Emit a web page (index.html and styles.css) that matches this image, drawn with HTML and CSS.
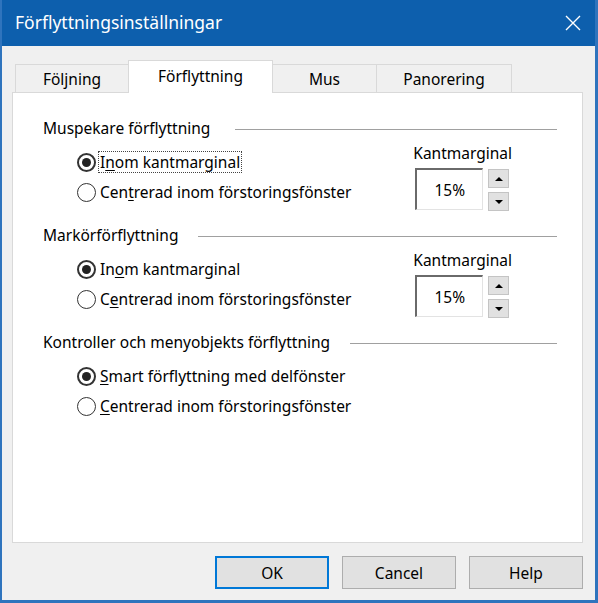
FILE: index.html
```html
<!DOCTYPE html>
<html lang="sv">
<head>
<meta charset="utf-8">
<title>Förflyttningsinställningar</title>
<link rel="stylesheet" href="styles.css">
</head>
<body>
<div class="window">
  <div class="titlebar">
    <span class="title">Förflyttningsinställningar</span>
    <span class="close">
      <svg width="16" height="16" viewBox="0 0 16 16"><path d="M1 1 L15 15 M15 1 L1 15" stroke="#fff" stroke-width="1.4" fill="none"/></svg>
    </span>
  </div>
  <div class="client">
    <div class="tabs">
      <div class="tab tab-1">Följning</div>
      <div class="tab tab-2 active">Förflyttning</div>
      <div class="tab tab-3">Mus</div>
      <div class="tab tab-4">Panorering</div>
    </div>
    <div class="panel">
      <div class="group">
        <div class="group-head"><span class="head-text">Muspekare förflyttning</span><span class="rule rule-wide"></span></div>
        <div class="group-body">
          <div class="radios">
            <div class="radio-row"><span class="radio checked"></span><span class="label focus">I<u>n</u>om kantmarginal</span></div>
            <div class="radio-row"><span class="radio"></span><span class="label">Cen<u>t</u>rerad inom förstoringsfönster</span></div>
          </div>
          <div class="spin-col">
            <div class="spin-label">Kantmarginal</div>
            <div class="spin-row">
              <div class="spin-box">15%</div>
              <div class="spin-btns">
                <div class="spin-btn"><span class="tri-up"></span></div>
                <div class="spin-btn"><span class="tri-down"></span></div>
              </div>
            </div>
          </div>
        </div>
      </div>
      <div class="group">
        <div class="group-head"><span class="head-text">Markörförflyttning</span><span class="rule"></span></div>
        <div class="group-body">
          <div class="radios">
            <div class="radio-row"><span class="radio checked"></span><span class="label">In<u>o</u>m kantmarginal</span></div>
            <div class="radio-row"><span class="radio"></span><span class="label">C<u>e</u>ntrerad inom förstoringsfönster</span></div>
          </div>
          <div class="spin-col">
            <div class="spin-label">Kantmarginal</div>
            <div class="spin-row">
              <div class="spin-box">15%</div>
              <div class="spin-btns">
                <div class="spin-btn"><span class="tri-up"></span></div>
                <div class="spin-btn"><span class="tri-down"></span></div>
              </div>
            </div>
          </div>
        </div>
      </div>
      <div class="group">
        <div class="group-head"><span class="head-text">Kontroller och menyobjekts förflyttning</span><span class="rule"></span></div>
        <div class="group-body">
          <div class="radios">
            <div class="radio-row"><span class="radio checked"></span><span class="label"><u>S</u>mart förflyttning med delfönster</span></div>
            <div class="radio-row"><span class="radio"></span><span class="label"><u>C</u>entrerad inom förstoringsfönster</span></div>
          </div>
        </div>
      </div>
    </div>
    <div class="buttons">
      <div class="btn default">OK</div>
      <div class="btn">Cancel</div>
      <div class="btn">Help</div>
    </div>
  </div>
</div>
</body>
</html>
```
FILE: styles.css
```css
html, body {
  margin: 0;
  padding: 0;
}
body {
  width: 598px;
  height: 603px;
  overflow: hidden;
  font-family: "Noto Sans", "DejaVu Sans", sans-serif;
  font-size: 15.5px;
  color: #000;
}
.window {
  width: 598px;
  height: 603px;
  box-sizing: border-box;
  border-left: 2px solid #2f74bd;
  border-right: 3px solid #2f74bd;
  border-bottom: 3px solid #2f74bd;
  background: #f0f0f0;
  display: flex;
  flex-direction: column;
}
.titlebar {
  height: 46px;
  flex: none;
  background: #0d5fad;
  color: #fff;
  display: flex;
  align-items: center;
  padding-left: 13px;
  padding-right: 14px;
}
.title {
  font-size: 17.5px;
  flex: 1;
  margin-top: -2px;
}
.close {
  width: 16px;
  height: 16px;
  display: flex;
}
.client {
  flex: 1;
  display: flex;
  flex-direction: column;
  padding: 14px 12px 0 10px;
}
.tabs {
  height: 32px;
  display: flex;
  align-items: flex-end;
  padding-left: 3px;
  position: relative;
  z-index: 1;
}
.tab {
  box-sizing: border-box;
  height: 28px;
  border: 1px solid #d9d9d9;
  border-bottom: 0;
  background: #f0f0f0;
  display: flex;
  align-items: center;
  justify-content: center;
  padding-top: 1px;
  margin-right: -1px;
}
.tab.active {
  height: 33px;
  background: #fff;
  padding-top: 0;
  padding-bottom: 2px;
  margin-bottom: -1px;
  position: relative;
  z-index: 2;
}
.tab-1 { width: 114px; }
.tab-2 { width: 145px; }
.tab-3 { width: 105px; }
.tab-4 { width: 136px; }
.panel {
  height: 451px;
  box-sizing: border-box;
  background: #fff;
  border: 1px solid #d9d9d9;
  padding: 24px 25px 0 30px;
}
.group + .group {
  margin-top: 13px;
}
.group-head {
  height: 22px;
  display: flex;
  align-items: center;
}
.rule {
  flex: 1;
  height: 1px;
  background: #a0a0a0;
  margin-left: 20px;
  margin-top: 2px;
}
.rule-wide {
  margin-left: 25px;
}
.group-body {
  display: flex;
  align-items: flex-start;
}
.radios {
  margin-left: 34px;
  margin-top: 8px;
  flex: 1;
}
.radio-row {
  height: 30px;
  display: flex;
  align-items: center;
}
.radio {
  box-sizing: border-box;
  width: 19px;
  height: 19px;
  border: 1px solid #333;
  border-radius: 50%;
  background: #fff;
  display: flex;
  align-items: center;
  justify-content: center;
  margin-right: 2px;
  flex: none;
}
.radio.checked {
  border-width: 2px;
}
.radio.checked::after {
  content: "";
  width: 9px;
  height: 9px;
  border-radius: 50%;
  background: #222;
}
.label {
  line-height: 20px;
  padding: 0 1px;
  border: 1px dotted transparent;
}
.label.focus {
  border-color: #444;
}
.label u {
  text-decoration-thickness: 1px;
  text-underline-offset: 2px;
}
.spin-col {
  margin-top: 3px;
  margin-right: 45px;
  display: flex;
  flex-direction: column;
}
.spin-label {
  height: 22px;
  line-height: 22px;
  margin-left: -2px;
  margin-bottom: 4px;
}
.spin-row {
  display: flex;
  gap: 5px;
}
.spin-box {
  box-sizing: border-box;
  width: 68px;
  height: 42px;
  border-top: 2px solid #6a6a6a;
  border-left: 2px solid #6a6a6a;
  border-right: 1px solid #e3e3e3;
  border-bottom: 1px solid #e3e3e3;
  display: flex;
  align-items: center;
  justify-content: center;
  background: #fff;
}
.spin-btns {
  display: flex;
  flex-direction: column;
  gap: 4px;
  padding-top: 1px;
}
.spin-btn {
  box-sizing: border-box;
  width: 21px;
  height: 19px;
  background: #e1e1e1;
  border: 1px solid #c4c4c4;
  display: flex;
  align-items: center;
  justify-content: center;
}
.tri-up {
  width: 0;
  height: 0;
  border-left: 4px solid transparent;
  border-right: 4px solid transparent;
  border-bottom: 4px solid #000;
}
.tri-down {
  width: 0;
  height: 0;
  border-left: 4px solid transparent;
  border-right: 4px solid transparent;
  border-top: 4px solid #000;
}
.buttons {
  display: flex;
  justify-content: flex-end;
  gap: 13px;
  margin-top: 13px;
  padding-right: 0;
}
.btn {
  box-sizing: border-box;
  width: 114px;
  height: 33px;
  background: #e1e1e1;
  border: 1px solid #adadad;
  display: flex;
  align-items: center;
  justify-content: center;
}
.btn.default {
  border: 2px solid #0078d7;
}
```
